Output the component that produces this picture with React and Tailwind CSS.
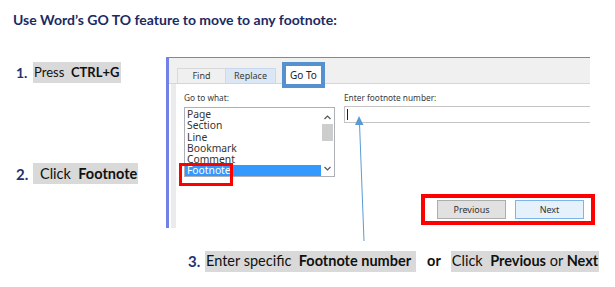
import React from 'react';

const items = ['Page', 'Section', 'Line', 'Bookmark', 'Comment', 'Footnote'];

function Step({ num, children, className = '', big = false }) {
  return (
    <div className={`flex items-center ${className}`}>
      <span className={`w-[17px] font-bold text-[#1f3370] ${big ? 'text-[15px]' : 'text-[14px]'}`}>{num}</span>
      {children}
    </div>
  );
}

function Hl({ children, className = '' }) {
  return (
    <span className={`inline-flex h-[21px] items-center bg-[#d9d9d9] text-[#111] whitespace-pre ${className}`}>
      {children}
    </span>
  );
}

export default function App() {
  return (
    <div className="relative w-[615px] h-[287px] overflow-hidden bg-white font-['Lato','Liberation_Sans',sans-serif]">
      <h1 className="h-[57px] pl-[13px] pt-[10px] text-[14px] font-bold leading-[20px] text-[#1b2a63]">
        Use Word’s GO TO feature to move to any footnote:
      </h1>

      <div className="flex h-[171px]">
        <div className="flex w-[166px] flex-col pl-[16px]">
          <Step num="1." className="mt-[5px]">
            <Hl className="pl-[1px] pr-[2px] text-[13px]">
              Press  <b>CTRL+G</b>
            </Hl>
          </Step>
          <Step num="2." big className="mt-auto mb-[43px]">
            <Hl className="pl-[7px] pr-[1px] text-[14.5px]">
              Click  <b>Footnote</b>
            </Hl>
          </Step>
        </div>

        {/* dialog */}
        <div className="flex w-[424px] flex-col border-l-[3px] border-t border-[#7381e6] bg-white font-['Noto_Sans','Liberation_Sans',sans-serif] text-[8.3px] text-[#3a3a3a]">
          <div className="flex h-[26px] items-end border-b border-[#d6d6d6] bg-[#f0f0f0] pl-[8px] text-[9px]">
            <div className="flex h-[15px] w-[49px] items-center justify-center border border-b-0 border-[#d9d9d9] bg-[#f0f0f0]">
              Find
            </div>
            <div className="flex h-[15px] w-[50px] items-center justify-center border border-b-0 border-l-0 border-[#c9d8ee] bg-[#dce7f5]">
              Replace
            </div>
            <div className="relative z-10 mb-[-5px] ml-[6px] flex h-[26px] w-[43px] items-center justify-center border-4 border-[#5590cf] bg-white text-[10px] text-[#222]">
              Go To
            </div>
          </div>

          <div className="flex flex-1">
            <div className="ml-[2px] w-[5px] bg-[#ebebee]" />
            <div className="flex flex-1 flex-col">
              <div className="flex">
                <div className="w-[159px] pl-[8px] pt-[8px]">
                  <div className="h-[12px] leading-[12px]">Go to what:</div>
                  <div className="relative mt-[3px] flex h-[70px] border border-[#adb0b6] bg-white">
                    <div className="flex-1 overflow-hidden pt-[1px] text-[10.3px] text-[#333]">
                      {items.map((it) => (
                        <div
                          key={it}
                          className={`h-[11.3px] pl-[2px] leading-[11.3px] ${
                            it === 'Footnote' ? 'bg-[#3399ff] text-white' : ''
                          }`}
                        >
                          {it}
                        </div>
                      ))}
                    </div>
                    <div className="flex w-[13px] flex-col items-center bg-white">
                      <svg width="9" height="14" viewBox="0 0 9 14" className="mt-[2px]">
                        <path d="M1.5 9 L4.5 6 L7.5 9" fill="none" stroke="#555" strokeWidth="1.2" />
                      </svg>
                      <div className="h-[17px] w-[11px] bg-[#cdcdcd]" />
                      <div className="flex-1" />
                      <svg width="9" height="12" viewBox="0 0 9 12" className="mb-[1px]">
                        <path d="M1.5 4 L4.5 7 L7.5 4" fill="none" stroke="#555" strokeWidth="1.2" />
                      </svg>
                    </div>
                    <div className="absolute left-[-6px] top-[55px] h-[23px] w-[54px] border-[3px] border-[#ff0000]" />
                  </div>
                </div>
                <div className="flex-1 pl-[9px] pt-[8px]">
                  <div className="h-[12px] leading-[12px]">Enter footnote number:</div>
                  <div className="mt-[2px] flex h-[17px] items-center border border-r-0 border-[#c4c4c4] pl-[2px]">
                    <div className="h-[11px] w-px bg-[#222]" />
                  </div>
                </div>
              </div>

              <div className="mt-[17px] flex justify-end">
                <div className="mr-[-5px] flex h-[31px] w-[174px] items-center gap-[9px] border-4 border-[#ff0000] pl-[12px] text-[9px]">
                  <div className="flex h-[19px] w-[69px] items-center justify-center border border-[#adadad] bg-[#e1e1e1] text-[#333]">
                    Previous
                  </div>
                  <div className="flex h-[19px] w-[69px] items-center justify-center border border-[#7eb4ea] bg-[#e5f1fb] text-[#333]">
                    Next
                  </div>
                </div>
              </div>
            </div>
          </div>
        </div>
      </div>

      <div className="flex pl-[188px] pt-[22px]">
        <Step num="3." big>
          <Hl className="pl-[1px] pr-[5px] text-[14.5px]">
            Enter specific  <b>Footnote number</b>
          </Hl>
          <b className="pl-[11px] pr-[10px] text-[14.5px] text-[#111]">or</b>
          <Hl className="pl-[1px] pr-[1px] text-[14.5px]">
            Click  <b>Previous</b> or <b>Next</b>
          </Hl>
        </Step>
      </div>

      <svg className="pointer-events-none absolute left-0 top-0" width="615" height="287">
        <line x1="359.5" y1="123" x2="364" y2="241" stroke="#5b9bd5" strokeWidth="1" />
        <polygon points="359,116 355,125 363.5,125" fill="#5b9bd5" />
      </svg>
    </div>
  );
}
